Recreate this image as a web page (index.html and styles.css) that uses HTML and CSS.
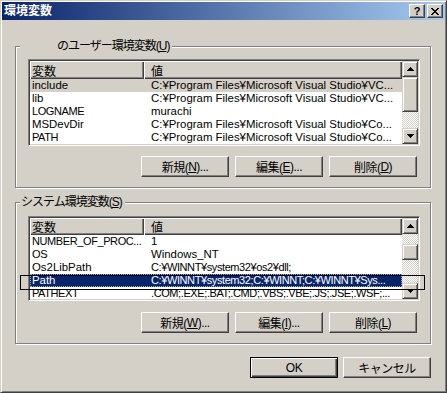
FILE: index.html
```html
<!DOCTYPE html>
<html lang="ja">
<head>
    <meta charset="UTF-8">
    <title>環境変数</title>
    <link rel="stylesheet" href="styles.css">
</head>
<body>
    <div class="window">
        <div class="titlebar">
            <span class="title">環境変数</span>
            <div class="caption-btns">
                <span class="cap-btn help">?</span>
                <span class="cap-btn close">
                    <svg width="8" height="7" viewBox="0 0 8 7"><path d="M0 0h2v1H0zM6 0h2v1H6zM1 1h2v1H1zM5 1h2v1H5zM2 2h4v1H2zM3 3h2v1H3zM2 4h4v1H2zM1 5h2v1H1zM5 5h2v1H5zM0 6h2v1H0zM6 6h2v1H6z"/></svg>
                </span>
            </div>
        </div>

        <div class="client">
            <div class="group">
                <div class="legend legend-user">のユーザー環境変数(<u>U</u>)</div>
                <div class="listview lv-user">
                    <div class="lv-body">
                        <div class="lv-header"><span class="hd-cell col-name">変数</span><span class="hd-cell col-value">値</span></div>
                        <div class="lv-row sel-inactive"><span class="col-name">include</span><span class="col-value">C:¥Program Files¥Microsoft Visual Studio¥VC...</span></div>
                        <div class="lv-row"><span class="col-name">lib</span><span class="col-value">C:¥Program Files¥Microsoft Visual Studio¥VC...</span></div>
                        <div class="lv-row"><span class="col-name tight">LOGNAME</span><span class="col-value">murachi</span></div>
                        <div class="lv-row"><span class="col-name">MSDevDir</span><span class="col-value">C:¥Program Files¥Microsoft Visual Studio¥Co...</span></div>
                        <div class="lv-row"><span class="col-name tight">PATH</span><span class="col-value">C:¥Program Files¥Microsoft Visual Studio¥Co...</span></div>
                    </div>
                    <div class="scrollbar">
                        <div class="sb-btn"><svg width="7" height="4" viewBox="0 0 7 4"><path d="M3 0h1v1H3zM2 1h3v1H2zM1 2h5v1H1zM0 3h7v1H0z"/></svg></div>
                        <div class="sb-btn thumb-user"></div>
                        <div class="sb-track"></div>
                        <div class="sb-btn"><svg width="7" height="4" viewBox="0 0 7 4"><path d="M0 0h7v1H0zM1 1h5v1H1zM2 2h3v1H2zM3 3h1v1H3z"/></svg></div>
                    </div>
                </div>
                <div class="btn-row">
                    <button class="btn">新規(<u>N</u>)...</button>
                    <button class="btn">編集(<u>E</u>)...</button>
                    <button class="btn">削除(<u>D</u>)</button>
                </div>
            </div>

            <div class="group group-system">
                <div class="legend legend-system">システム環境変数(<u>S</u>)</div>
                <div class="listview lv-system">
                    <div class="lv-body">
                        <div class="lv-header"><span class="hd-cell col-name">変数</span><span class="hd-cell col-value">値</span></div>
                        <div class="lv-row"><span class="col-name tight">NUMBER_OF_PROC...</span><span class="col-value">1</span></div>
                        <div class="lv-row"><span class="col-name tight">OS</span><span class="col-value">Windows_NT</span></div>
                        <div class="lv-row"><span class="col-name">Os2LibPath</span><span class="col-value tight">C:¥WINNT¥system32¥os2¥dll;</span></div>
                        <div class="lv-row sel-active"><span class="col-name">Path</span><span class="col-value tight">C:¥WINNT¥system32;C:¥WINNT;C:¥WINNT¥Sys...</span></div>
                        <div class="lv-row"><span class="col-name tight">PATHEXT</span><span class="col-value tight">.COM;.EXE;.BAT;.CMD;.VBS;.VBE;.JS;.JSE;.WSF;...</span></div>
                    </div>
                    <div class="scrollbar">
                        <div class="sb-btn"><svg width="7" height="4" viewBox="0 0 7 4"><path d="M3 0h1v1H3zM2 1h3v1H2zM1 2h5v1H1zM0 3h7v1H0z"/></svg></div>
                        <div class="sb-track track-top"></div>
                        <div class="sb-btn"></div>
                        <div class="sb-track"></div>
                        <div class="sb-btn"><svg width="7" height="4" viewBox="0 0 7 4"><path d="M0 0h7v1H0zM1 1h5v1H1zM2 2h3v1H2zM3 3h1v1H3z"/></svg></div>
                    </div>
                </div>
                <div class="btn-row">
                    <button class="btn">新規(<u>W</u>)...</button>
                    <button class="btn">編集(<u>I</u>)...</button>
                    <button class="btn">削除(<u>L</u>)</button>
                </div>
            </div>

            <div class="dialog-btns">
                <button class="btn btn-default">OK</button>
                <button class="btn">キャンセル</button>
            </div>
        </div>

        <div class="focus-frame"></div>
    </div>
</body>
</html>
```

FILE: styles.css
```css
body {
    margin: 0;
    background: #d4d0c8;
    font-family: "Liberation Sans", "Noto Sans CJK JP", sans-serif;
    font-size: 12px;
    color: #000;
}
.window {
    position: relative;
    width: 447px;
    height: 393px;
    box-sizing: border-box;
    padding: 1px;
    border: 1px solid;
    border-color: #d4d0c8 #404040 #404040 #d4d0c8;
    box-shadow: inset 1px 1px 0 #fff, inset -1px -1px 0 #808080;
    background: #d4d0c8;
    overflow: hidden;
}
.titlebar {
    height: 18px;
    display: flex;
    align-items: center;
    justify-content: space-between;
    padding-left: 2px;
    background: linear-gradient(to right, #0a246a, #a6caf0);
}
.title {
    color: #fff;
    font-weight: bold;
    font-size: 12px;
    line-height: 14px;
}
.caption-btns {
    display: flex;
    gap: 2px;
    margin-right: 2px;
}
.cap-btn {
    width: 16px;
    height: 14px;
    box-sizing: border-box;
    display: flex;
    align-items: center;
    justify-content: center;
    background: #d4d0c8;
    border: 1px solid;
    border-color: #fff #404040 #404040 #fff;
    box-shadow: inset -1px -1px 0 #808080;
}
.help {
    font-weight: bold;
    font-size: 11px;
    line-height: 12px;
}
.close svg {
    display: block;
    shape-rendering: crispEdges;
}
.client {
    padding: 26px 12px 0 13px;
}
.group {
    width: 416px;
    box-sizing: border-box;
    display: flex;
    flex-direction: column;
    padding: 0 12px 10px 12px;
    border: 1px solid #808080;
    box-shadow: inset 1px 1px 0 #fff, 1px 1px 0 #fff;
}
.group-system {
    margin-top: 14px;
}
.legend {
    align-self: flex-start;
    height: 14px;
    line-height: 14px;
    margin: -8px 0 0 -8px;
    padding-right: 3px;
    background: #d4d0c8;
    letter-spacing: -1px;
}
.legend-user {
    padding-left: 37px;
}
.legend-system {
    padding-left: 1px;
}
.listview {
    display: flex;
    box-sizing: border-box;
    width: 392px;
    border: 1px solid;
    border-color: #808080 #fff #fff #808080;
    box-shadow: inset 1px 1px 0 #404040, inset -1px -1px 0 #d4d0c8;
    padding: 1px;
    background: #fff;
}
.lv-user {
    height: 87px;
    margin-top: 6px;
}
.lv-system {
    height: 85px;
    margin-top: 7px;
}
.lv-body {
    flex: 1;
    overflow: hidden;
    background: #fff;
}
.lv-header {
    display: flex;
    height: 17px;
}
.lv-user .lv-header {
    height: 18px;
}
.hd-cell {
    box-sizing: border-box;
    display: flex;
    align-items: center;
    background: #d4d0c8;
    box-shadow: inset 1px 1px 0 #fff, inset -1px -1px 0 #404040, inset -2px -2px 0 #808080;
    font-size: 12px;
}
.col-name {
    width: 114px;
    flex: none;
    padding-left: 2px;
    box-sizing: border-box;
    overflow: hidden;
    white-space: nowrap;
}
.col-value {
    flex: 1;
    padding-left: 7px;
    overflow: hidden;
    white-space: nowrap;
}
.lv-row {
    display: flex;
    height: 13px;
    line-height: 13px;
    font-size: 11.4px;
}
.lv-row .tight {
    font-size: 11px;
    letter-spacing: -0.4px;
}
.sel-inactive {
    background: #d4d0c8;
}
.sel-active {
    background: #0a246a;
    color: #fff;
    outline: 1px dotted #9aa6c4;
    outline-offset: -1px;
}
.scrollbar {
    width: 16px;
    display: flex;
    flex-direction: column;
}
.sb-btn {
    height: 16px;
    flex: none;
    box-sizing: border-box;
    display: flex;
    align-items: center;
    justify-content: center;
    background: #d4d0c8;
    border: 1px solid;
    border-color: #d4d0c8 #404040 #404040 #d4d0c8;
    box-shadow: inset 1px 1px 0 #fff, inset -1px -1px 0 #808080;
}
.sb-btn svg {
    display: block;
    shape-rendering: crispEdges;
}
.thumb-user {
    height: 35px;
}
.sb-track {
    flex: 1;
    background: repeating-conic-gradient(#fff 0 25%, #d4d0c8 0 50%) 0 0 / 2px 2px;
}
.track-top {
    flex: none;
    height: 10px;
}
.btn-row {
    display: flex;
    justify-content: flex-end;
    gap: 6px;
    margin-top: 10px;
    padding-right: 1px;
}
.group-system .btn-row {
    margin-top: 11px;
}
.btn {
    width: 88px;
    height: 21px;
    box-sizing: border-box;
    padding: 0;
    display: flex;
    align-items: center;
    justify-content: center;
    background: #d4d0c8;
    border: 1px solid;
    border-color: #fff #404040 #404040 #fff;
    box-shadow: inset -1px -1px 0 #808080;
    font-family: "Liberation Sans", "Noto Sans CJK JP", sans-serif;
    font-size: 12px;
    color: #000;
    letter-spacing: -0.5px;
}
.btn-default {
    border-color: #000;
    box-shadow: inset 1px 1px 0 #fff, inset -1px -1px 0 #404040, inset -2px -2px 0 #808080;
}
.dialog-btns {
    width: 416px;
    display: flex;
    justify-content: flex-end;
    gap: 5px;
    margin-top: 13px;
}
.focus-frame {
    position: absolute;
    left: 19px;
    top: 274px;
    width: 405px;
    height: 15px;
    box-sizing: border-box;
    border: 1px solid #000;
    pointer-events: none;
}
```
